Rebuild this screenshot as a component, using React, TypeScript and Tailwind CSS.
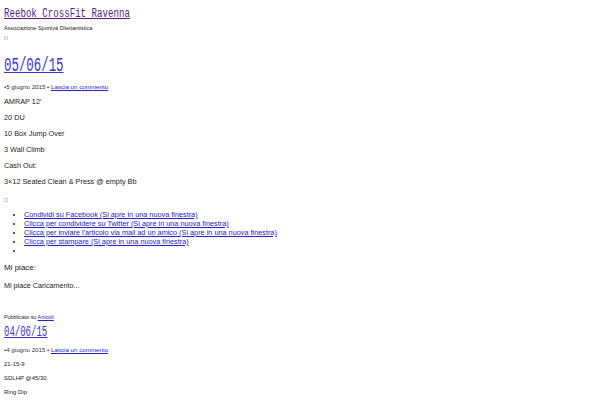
import React from 'react'

const sans = "font-['Liberation_Sans',Arial,sans-serif]"
const mono = "font-['Liberation_Mono','Courier_New',monospace]"

const Blank: React.FC<{ className?: string }> = ({ className = '' }) => (
  <div className={`w-[4px] h-[4px] border border-[#d8d8d8] bg-[#f2f2f2] ${className}`} />
)

const shares = [
  'Condividi su Facebook (Si apre in una nuova finestra)',
  'Clicca per condividere su Twitter (Si apre in una nuova finestra)',
  "Clicca per inviare l'articolo via mail ad un amico (Si apre in una nuova finestra)",
  'Clicca per stampare (Si apre in una nuova finestra)',
]

export default function App() {
  return (
    <div className={`w-[600px] h-[400px] overflow-hidden bg-white text-[#222] pl-[4px] pt-[8px] ${sans}`}>
      {/* Site header */}
      <a href="#" className={`block w-max leading-[12px] text-[12px] text-[#551a8b] underline origin-left scale-x-[0.76] ${mono}`}>
        Reebok CrossFit Ravenna
      </a>
      <div className="mt-[4px] leading-[8px] text-[5.5px] text-[#222]">Associazione Sportiva Dilettantistica</div>
      <Blank className="mt-[4px]" />

      {/* Post 05/06/15 */}
      <a href="#" className={`block w-max mt-[16px] leading-[20px] text-[20px] text-[#3535d4] underline decoration-1 origin-left scale-x-[0.62] ${mono}`}>
        05/06/15
      </a>
      <div className="mt-[7px] leading-[8px] text-[6.2px] text-[#333]">
        •5 giugno 2015 • <a href="#" className="text-[#2222cc] underline">Lascia un commento</a>
      </div>
      <div className="flex flex-col gap-[6px] mt-[6px] text-[7.3px] leading-[10px] text-[#222]">
        <p>AMRAP 12′</p>
        <p>20 DU</p>
        <p>10 Box Jump Over</p>
        <p>3 Wall Climb</p>
        <p>Cash Out:</p>
        <p>3×12 Seated Clean &amp; Press @ empty Bb</p>
      </div>
      <Blank className="mt-[11px]" />
      <ul className="mt-[8px] list-disc pl-[20px] text-[7.3px] leading-[9px]">
        {shares.map((s) => (
          <li key={s}>
            <a href="#" className="text-[#2222cc] underline">{s}</a>
          </li>
        ))}
        <li>&nbsp;</li>
      </ul>
      <div className="mt-[8px] leading-[10px] text-[8px] text-[#222]">Mi piace:</div>
      <div className="mt-[8px] leading-[10px] text-[7.2px] text-[#222]">Mi piace Caricamento...</div>

      <div className="mt-[22px] leading-[8px] text-[5.4px] text-[#222]">
        Pubblicato su <a href="#" className="text-[#2222cc] underline">Articoli</a>
      </div>

      {/* Post 04/06/15 */}
      <a href="#" className={`block w-max mt-[4px] leading-[15px] text-[15px] text-[#3535d4] underline decoration-1 origin-left scale-x-[0.6] ${mono}`}>
        04/06/15
      </a>
      <div className="mt-[6px] leading-[8px] text-[6.2px] text-[#333]">
        •4 giugno 2015 • <a href="#" className="text-[#2222cc] underline">Lascia un commento</a>
      </div>
      <div className="flex flex-col gap-[6px] mt-[6px] text-[6px] leading-[8px] text-[#222]">
        <p>21-15-9</p>
        <p>SDLHP @45/30</p>
        <p>Ring Dip</p>
        <p>Push Press</p>
      </div>
    </div>
  )
}
